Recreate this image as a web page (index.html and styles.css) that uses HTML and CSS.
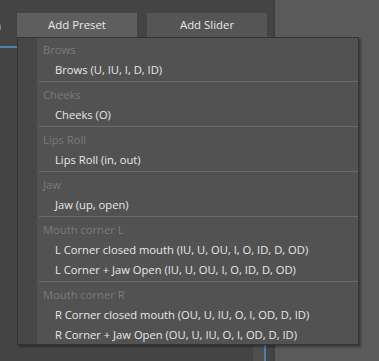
FILE: index.html
```html
<!doctype html>
<html lang="en">
    <head>
        <meta charset="UTF-8">
        <title>Add Preset</title>
        <link rel="stylesheet" href="styles.css">
    </head>
    <body>
        <div class="app">
            <div class="panel">
                <div class="toolbar">
                    <span class="cut">a</span>
                    <button class="btn btn-hover">Add Preset</button>
                    <button class="btn">Add Slider</button>
                </div>
                <div class="tabline"></div>
                <div class="fill"></div>
                <div class="scroll">
                    <div class="track"></div>
                    <div class="thumb"></div>
                </div>
            </div>
            <div class="side"></div>

            <div class="menu">
                <div class="head">Brows</div>
                <div class="item">Brows (U, IU, I, D, ID)</div>
                <div class="sep"></div>
                <div class="head">Cheeks</div>
                <div class="item">Cheeks (O)</div>
                <div class="sep"></div>
                <div class="head">Lips Roll</div>
                <div class="item">Lips Roll (in, out)</div>
                <div class="sep"></div>
                <div class="head">Jaw</div>
                <div class="item">Jaw (up, open)</div>
                <div class="sep"></div>
                <div class="head">Mouth corner L</div>
                <div class="item">L Corner closed mouth (IU, U, OU, I, O, ID, D, OD)</div>
                <div class="item">L Corner + Jaw Open (IU, U, OU, I, O, ID, D, OD)</div>
                <div class="sep"></div>
                <div class="head">Mouth corner R</div>
                <div class="item">R Corner closed mouth (OU, U, IU, O, I, OD, D, ID)</div>
                <div class="item">R Corner + Jaw Open (OU, U, IU, O, I, OD, D, ID)</div>
            </div>
        </div>
    </body>
</html>
```

FILE: styles.css
```css
body {
    margin: 0;
    font-family: "Open Sans", "Noto Sans", sans-serif;
    font-size: 11.2px;
}
.app {
    position: relative;
    display: flex;
    width: 379px;
    height: 361px;
    overflow: hidden;
    background: #5a5a5a;
}
.panel {
    display: flex;
    flex-direction: column;
    width: 273px;
    background: #444444;
    border-right: 2px solid #3f3f3f;
}
.side {
    flex: 1;
}
.toolbar {
    display: flex;
    align-items: center;
    gap: 10px;
    padding-top: 13px;
    height: 24px;
}
.cut {
    width: 7px;
    margin-left: -5px;
    color: #dddddd;
    margin-right: 5px;
    overflow: hidden;
}
.btn {
    width: 120px;
    height: 24px;
    padding: 0 0 1px;
    border: none;
    background: #555555;
    color: #e8e8e8;
    font-family: inherit;
    font-size: 11.4px;
}
.btn-hover {
    background: #5e5e5e;
}
.tabline {
    width: 17px;
    height: 2px;
    margin-top: 9px;
    background: #4f81ab;
}
.fill {
    flex: 1;
}
.scroll {
    display: flex;
    height: 18px;
    margin-left: 253px;
}
.track {
    width: 11px;
    background: #4f4f4f;
}
.thumb {
    width: 2px;
    background: #4b7ea8;
}

.menu {
    position: absolute;
    left: 17px;
    top: 37px;
    width: 340px;
    padding-top: 1px;
    border: 1px solid #343434;
    background: linear-gradient(to right, #474747 19px, #525252 19px);
    box-shadow: 2px 2px 2px rgba(0, 0, 0, 0.35);
}
.head,
.item {
    height: 20px;
    line-height: 21px;
    white-space: nowrap;
}
.head {
    padding-left: 25px;
    color: #7a7a7a;
}
.item {
    padding-left: 37px;
    color: #e8e8e8;
}
.sep {
    height: 1px;
    margin: 2px 0 2px 21px;
    background: #6a6a6a;
}
```
